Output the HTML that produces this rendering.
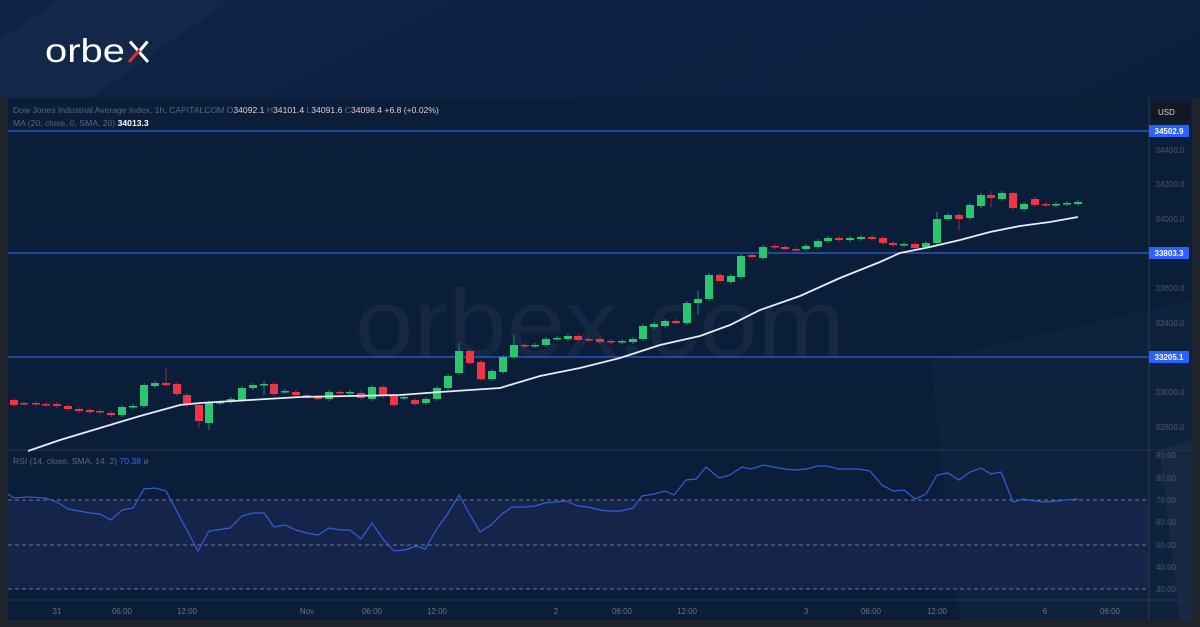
<!DOCTYPE html>
<html><head><meta charset="utf-8">
<style>
html,body{margin:0;padding:0;width:1200px;height:627px;overflow:hidden;background:#0b1e3c;font-family:"Liberation Sans",sans-serif}
svg{position:absolute;left:0;top:0}
</style></head><body>
<svg id="s" width="1200" height="627" viewBox="0 0 1200 627" xmlns="http://www.w3.org/2000/svg">
<defs>
<linearGradient id="bg" x1="0" y1="0" x2="1" y2="1">
<stop offset="0" stop-color="#0e2446"/><stop offset="1" stop-color="#0a1c38"/></linearGradient>
</defs>
<rect width="1200" height="627" fill="url(#bg)"/>
<polygon points="60,0 230,0 90,98 0,98 0,40" fill="#ffffff" opacity="0.025"/>
<rect x="0" y="98" width="8" height="529" fill="#1f232c"/>
<rect x="1192" y="98" width="8" height="529" fill="#1f232c"/>
<rect x="0" y="620" width="1200" height="7" fill="#1f232c"/>
<rect x="8" y="98" width="1184" height="522" fill="#0a1d39"/>
<polygon points="930,360 1192,300 1192,620 960,620" fill="#ffffff" opacity="0.025"/>
<polygon points="1160,450 1192,440 1192,620 1180,620" fill="#ffffff" opacity="0.03"/>
<text x="600" y="356" font-size="96" fill="#ffffff" opacity="0.045" text-anchor="middle" font-family="Liberation Sans,sans-serif" textLength="490" lengthAdjust="spacingAndGlyphs">orbex.com</text>
<text x="45" y="62" font-size="33" fill="#ffffff" font-family="Liberation Sans,sans-serif" textLength="80" lengthAdjust="spacingAndGlyphs">orbe</text>
<path d="M130 41.5 L148 62" stroke="#ffffff" stroke-width="3" fill="none"/>
<path d="M139.5 51 L147.5 41.5" stroke="#ffffff" stroke-width="3" fill="none"/>
<path d="M129 62 L139.5 50" stroke="#e6283a" stroke-width="3" fill="none"/>
<g id="g"></g>
</svg>
<script>
const g=document.getElementById('g');let h='';
const T=(x,y,t,c,s,a,w)=>{h+=`<text x="${x}" y="${y}" font-size="${s||8}" fill="${c}" ${a?'text-anchor="'+a+'"':''} ${w?'font-weight="bold"':''}>${t}</text>`};
h+='<rect x="8" y="500" width="1141" height="89" fill="#152549"/>';
[500,545,589].forEach(y=>h+=`<line x1="8" x2="1149" y1="${y}" y2="${y}" stroke="#6f7890" stroke-dasharray="4 3" stroke-width="1"/>`);
h+='<line x1="8" x2="1192" y1="450" y2="450" stroke="#2a3446"/><line x1="8" x2="1192" y1="600" y2="600" stroke="#2a3446"/><line x1="1149" x2="1149" y1="98" y2="620" stroke="#2f3848"/>';
[131,253,357].forEach(y=>h+=`<line x1="8" x2="1149" y1="${y}" y2="${y}" stroke="#2d62d6" stroke-width="1.3"/>`);
const C=[[14,400,405],[24,403,404],[36,403,404],[46,404,405],[57,404,406],[68,406,409],[79,409,411],[90,410,412],[100,411,412],[111,413,415],[122,415,407],[133,407,406],[144,406,385],[155,386,383],[166,383,385,368],[177,384,394],[187,395,405],[199,405,421,0,428],[209,423,403,0,430],[220,403,402],[231,402,399],[242,400,388],[253,388,385],[264,385,384,381,395],[274,384,394],[285,392,391],[296,392,395],[307,395,397],[318,397,399],[329,399,392],[340,392,393],[350,393,392],[361,393,398],[372,399,387],[383,387,396],[394,395,405],[404,398,397],[415,400,404],[426,403,399],[437,399,388],[448,388,376],[459,373,351,343],[470,351,363],[481,362,379],[492,379,371],[503,372,357],[514,357,345,335],[525,345,346],[535,346,345],[546,345,339],[557,339,338],[568,339,336],[578,336,340],[589,339,340],[600,339,342],[611,341,342],[622,342,341],[633,342,339],[643,339,326],[654,327,324],[665,326,321],[676,321,323],[687,323,303],[698,303,299,291,315],[709,299,275],[720,275,281],[731,282,276],[741,277,256],[752,255,257],[763,258,247],[775,246,247],[785,247,249],[796,249,250],[806,249,246],[818,247,241],[828,241,238],[839,238,240],[850,240,238],[861,239,237],[872,237,239],[883,238,243],[893,243,245],[904,245,244],[915,244,248],[926,247,243],[937,243,219,212],[948,219,215],[959,215,219,0,230],[970,218,205],[981,206,195],[991,195,198,191,207],[1002,199,193],[1013,193,208],[1024,209,204],[1035,199,205],[1046,204,205],[1056,205,204],[1067,204,203],[1078,204,202]];
C.forEach(c=>{const[x,o,cl,hi,lo]=c;const up=cl<o;const col=up?'#2bc46f':'#ef3446';const t=Math.min(o,cl),b=Math.max(o,cl);const H=hi||t-2,L=lo||b+2;
h+=`<line x1="${x}" x2="${x}" y1="${H}" y2="${L}" stroke="${up?'#1f8f55':'#a3283a'}" stroke-width="1"/><rect x="${x-4}" y="${t}" width="8" height="${Math.max(b-t,1.5)}" fill="${col}"/>`});
h+='<polyline fill="none" stroke="#e8ecf2" stroke-width="1.8" points="28,451 60,440 100,428 140,416 180,405 200,403 250,400 300,397 350,396 400,395 440,392 470,390 500,388 540,376 580,368 620,358 660,345 700,336 730,325 760,310 800,296 840,278 880,262 900,253 930,247 960,240 990,232 1020,226 1050,222 1078,217"/>';
h+='<polyline fill="none" stroke="#2f5fd6" stroke-width="1.2" points="8,494 14,498 28,497 45,498 57,502 68,509 90,513 100,514 111,520 122,510 133,508 144,489 155,488 166,491 198,551 209,531 230,528 242,516 253,513 264,513 274,527 285,525 296,530 307,533 318,535 329,528 340,530 350,530 361,539 372,523 383,539 394,551 405,550 416,546 425,549 438,527 447,515 459,495 469,513 480,532 491,525 502,514 512,507 524,507 535,506 545,503 555,502 566,501 578,506 588,507 600,510 609,511 621,511 633,508 642,496 654,494 665,491 674,495 686,480 696,479 706,467 719,478 730,475 742,467 751,469 764,465 773,467 785,469 795,470 807,469 817,466 827,466 839,469 848,469 859,469 870,471 882,485 893,491 904,490 915,499 926,494 937,475 948,473 959,480 970,472 981,468 991,474 1001,472 1013,502 1023,499 1035,501 1045,502 1057,501 1066,500 1078,499"/>';
[[34400,150],[34200,184],[34000,219],[33600,288],[33400,323],[33000,392],[32800,427]].forEach(p=>T(1170,p[1]+3,p[0]+'.0','#4d5668',8,'middle'));
[['34502.9',131],['33803.3',253],['33205.1',357]].forEach(p=>{h+=`<rect x="1149" y="${p[1]-6}" width="40" height="12" rx="1" fill="#2962ff"/>`;T(1169,p[1]+3,p[0],'#fff',8,'middle',1)});
h+='<rect x="1152" y="102" width="38" height="19" rx="2" fill="#131722"/>';T(1158,115,'USD','#d1d4dc',8);
[[90,455],[80,478],[70,500],[60,522],[50,545],[40,567],[30,589]].forEach(p=>T(1166,p[1]+3,p[0]+'.00','#4d5668',8,'middle'));
[['31',57],['06:00',122],['12:00',187],['Nov',307],['06:00',372],['12:00',437],['2',556],['06:00',622],['12:00',687],['3',806],['06:00',871],['12:00',937],['6',1045],['06:00',1110]].forEach(p=>T(p[1],614,p[0],'#6b7385',8,'middle'));
h+=`<text x="13" y="113" font-size="8.6" fill="#5d6679">Dow Jones Industrial Average Index, 1h, CAPITALCOM  O<tspan fill="#e8c7d4">34092.1</tspan>  H<tspan fill="#e8c7d4">34101.4</tspan>  L<tspan fill="#e8c7d4">34091.6</tspan>  C<tspan fill="#e8c7d4">34098.4</tspan>  <tspan fill="#e8c7d4">+6.8 (+0.02%)</tspan></text>`;
h+=`<text x="13" y="126" font-size="8.6" fill="#5d6679">MA (20, close, 0, SMA, 20)  <tspan fill="#ffffff" font-weight="bold">34013.3</tspan></text>`;
h+=`<text x="13" y="464" font-size="8.6" fill="#5d6679">RSI (14, close, SMA, 14, 2)  <tspan fill="#2f6bff">70.38</tspan>  ø</text>`;
g.innerHTML=h;
</script>
</body></html>
